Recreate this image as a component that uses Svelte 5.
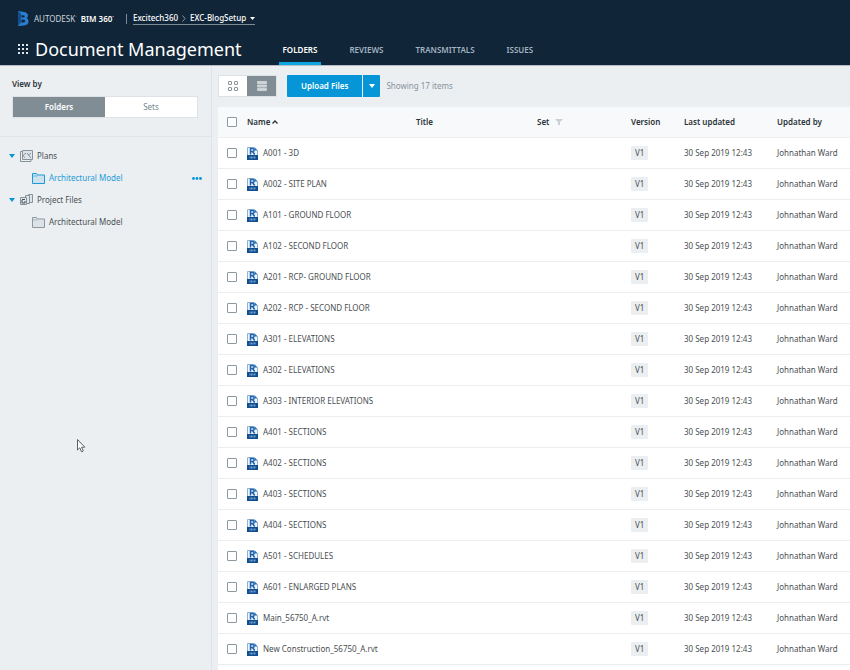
<script lang="ts">
  interface FileRow {
    name: string;
    version: string;
    updated: string;
    by: string;
  }

  const tabs = ['FOLDERS', 'REVIEWS', 'TRANSMITTALS', 'ISSUES'];

  const names = [
    'A001 - 3D',
    'A002 - SITE PLAN',
    'A101 - GROUND FLOOR',
    'A102 - SECOND FLOOR',
    'A201 - RCP- GROUND FLOOR',
    'A202 - RCP - SECOND FLOOR',
    'A301 - ELEVATIONS',
    'A302 - ELEVATIONS',
    'A303 - INTERIOR ELEVATIONS',
    'A401 - SECTIONS',
    'A402 - SECTIONS',
    'A403 - SECTIONS',
    'A404 - SECTIONS',
    'A501 - SCHEDULES',
    'A601 - ENLARGED PLANS',
    'Main_56750_A.rvt',
    'New Construction_56750_A.rvt',
  ];

  const files: FileRow[] = names.map((name) => ({
    name,
    version: 'V1',
    updated: '30 Sep 2019 12:43',
    by: 'Johnathan Ward',
  }));

  let activeTab = $state('FOLDERS');
  let viewBy = $state('Folders');
  let layout = $state('list');
  let selected = $state<string[]>([]);
  let allSelected = $derived(selected.length === files.length);

  function toggleAll() {
    selected = allSelected ? [] : files.map((f) => f.name);
  }
</script>

{#snippet folder()}
  <svg class="folder" width="13" height="11" viewBox="0 0 13 11">
    <path d="M.5 10.500v-10h4l1 1.500h7v8.500z" fill="currentColor" fill-opacity=".15" stroke="currentColor" />
    <path d="M.5 3h5" stroke="currentColor" stroke-opacity=".6" />
  </svg>
{/snippet}

<div class="app">
  <header>
    <div class="brand">
      <svg width="11" height="15" viewBox="0 0 11 15">
        <path d="M0 0l6 1c3 .5 4 2 4 3.500 0 1.200-.6 2-1.500 2.500 1.300.6 2 1.700 2 3.200 0 2.500-1.500 3.800-4.500 4.200L0 15z" fill="#2b7fd0" />
        <path d="M0 0l3 2.500v9L0 15z" fill="#134f8e" />
        <path d="M3.500 4l2.500.4c1 .2 1 1.600 0 1.800l-2.500.3zM3.500 8.500l2.800.2c1.200.2 1.200 2.200 0 2.500l-2.800.6z" fill="#102538" />
      </svg>
      <span class="maker">AUTODESK<sup>·</sup> <b>BIM 360<sup>·</sup></b></span>
      <span class="bar"></span>
      <button class="project">
        Excitech360
        <svg width="4" height="7" viewBox="0 0 4 7"><path d="M.5.5l2.500 3-2.500 3" fill="none" stroke="#8a99a5" /></svg>
        EXC-BlogSetup
        <svg width="5" height="3" viewBox="0 0 5 3"><path d="M0 0h5L2.500 3z" fill="#fff" /></svg>
      </button>
    </div>
    <div class="module">
      <button class="apps" aria-label="Switch module">
        <svg width="11" height="11" viewBox="0 0 11 11" fill="#dfe5ea">
          {#each [0, 4, 8] as y}
            {#each [0, 4, 8] as x}
              <rect {x} {y} width="2" height="2" />
            {/each}
          {/each}
        </svg>
      </button>
      <h1>Document Management</h1>
      <nav>
        {#each tabs as tab}
          <a href="#{tab.toLowerCase()}" class:active={activeTab === tab} onclick={() => (activeTab = tab)}>{tab}</a>
        {/each}
      </nav>
    </div>
  </header>

  <div class="body">
    <aside>
      <div class="view-by">
        <h2>View by</h2>
        <div class="switch">
          {#each ['Folders', 'Sets'] as v}
            <button class:on={viewBy === v} onclick={() => (viewBy = v)}>{v}</button>
          {/each}
        </div>
      </div>
      <ul class="tree">
        <li>
          <a href="#plans" class="root">
            <svg class="caret" width="6" height="4" viewBox="0 0 6 4"><path d="M0 0h6L3 4z" /></svg>
            <svg width="13" height="12" viewBox="0 0 13 12" fill="none" stroke="#87929a">
              <path d="M2.500 9.500v-9h10v9z" fill="#dfe4e8" />
              <path d="M2.500 1.500h-2v10h10.500v-2" />
              <path d="M6 3.500c-2 0-2.500 1.500-2.500 2.200S4 7.500 5 7.500M7 3l4 5M8 5.500l3-2.500" />
            </svg>
            Plans
          </a>
        </li>
        <li>
          <a href="#plans-model" class="child current">{@render folder()}Architectural Model</a>
          <button class="more" aria-label="More actions">
            <svg width="10" height="3" viewBox="0 0 10 3">
              <circle cx="1.500" cy="1.500" r="1.400" /><circle cx="5" cy="1.500" r="1.400" /><circle cx="8.500" cy="1.500" r="1.400" />
            </svg>
          </button>
        </li>
        <li>
          <a href="#project-files" class="root">
            <svg class="caret" width="6" height="4" viewBox="0 0 6 4"><path d="M0 0h6L3 4z" /></svg>
            <svg width="13" height="12" viewBox="0 0 13 12" fill="#dfe4e8" stroke="#87929a">
              <path d="M8.500.5h4v8h-4z" />
              <path d="M5.500 1.500h4v8h-4z" />
              <path d="M.5 3.500h6v7h-6z" />
              <path d="M2 5.500h3M2 6v3h3V7" stroke="#46525b" />
            </svg>
            Project Files
          </a>
        </li>
        <li>
          <a href="#files-model" class="child">{@render folder()}Architectural Model</a>
        </li>
      </ul>
    </aside>

    <main>
      <div class="toolbar">
        <div class="layouts">
          <button aria-label="Grid view" class:on={layout === 'grid'} onclick={() => (layout = 'grid')}>
            <svg width="10" height="10" viewBox="0 0 10 10" fill="none" stroke="currentColor">
              <rect x=".5" y=".5" width="3" height="3" rx=".5" /><rect x="6.500" y=".5" width="3" height="3" rx=".5" />
              <rect x=".5" y="6.500" width="3" height="3" rx=".5" /><rect x="6.500" y="6.500" width="3" height="3" rx=".5" />
            </svg>
          </button>
          <button aria-label="List view" class:on={layout === 'list'} onclick={() => (layout = 'list')}>
            <svg width="10" height="10" viewBox="0 0 10 10" fill="#cdd3d7">
              <rect width="10" height="3" rx="1" /><rect y="3.500" width="10" height="3" rx="1" /><rect y="7" width="10" height="3" rx="1" />
            </svg>
          </button>
        </div>
        <div class="upload">
          <button class="go">Upload Files</button>
          <button class="drop" aria-label="Upload options">
            <svg width="6" height="4" viewBox="0 0 6 4"><path d="M0 0h6L3 4z" fill="#fff" /></svg>
          </button>
        </div>
        <span class="count">Showing {files.length} items</span>
      </div>

      <div class="list">
        <table>
          <colgroup>
            <col class="c-check" /><col /><col class="c-title" /><col class="c-set" />
            <col class="c-version" /><col class="c-updated" /><col class="c-by" />
          </colgroup>
          <thead>
            <tr>
              <th class="check"><input type="checkbox" aria-label="Select all" checked={allSelected} onchange={toggleAll} /></th>
              <th>
                Name
                <svg class="sort" width="6" height="4" viewBox="0 0 6 4"><path d="M.5 3.500L3 1l2.500 2.500" fill="none" stroke="#2b3338" stroke-width="1.300" /></svg>
              </th>
              <th>Title</th>
              <th>
                Set
                <svg class="filter" width="8" height="6" viewBox="0 0 8 6"><path d="M0 0h8L5 3v3H3V3z" fill="#c9d2d7" /></svg>
              </th>
              <th>Version</th>
              <th>Last updated</th>
              <th>Updated by</th>
            </tr>
          </thead>
          <tbody>
            {#each files as f (f.name)}
              <tr>
                <td class="check"><input type="checkbox" aria-label="Select {f.name}" value={f.name} bind:group={selected} /></td>
                <td>
                  <div class="name">
                    <svg width="11" height="13" viewBox="0 0 11 13">
                      <path d="M.5.5h7l3 3v9H.5z" fill="#eef4fa" stroke="#8fb0d0" />
                      <path d="M7.500.5v3h3z" fill="#2c6fb0" />
                      <path d="M3.500 7.500v-6h2c2.200 0 2.200 3 0 3h-2M5.500 4.500l2.200 3" fill="none" stroke="#1b62ae" stroke-width="1.500" />
                      <path d="M0 8h11v5H0z" fill="#0f4f91" />
                      <path d="M3 9.500v2M4.500 9.500v2M6 9.500v2M7 10h1.500M7.800 10v1.500" stroke="#a9c6e4" stroke-width=".7" />
                    </svg>
                    {f.name}
                  </div>
                </td>
                <td></td>
                <td></td>
                <td><span class="badge">{f.version}</span></td>
                <td>{f.updated}</td>
                <td>{f.by}</td>
              </tr>
            {/each}
          </tbody>
        </table>
      </div>
    </main>
  </div>

  <svg class="pointer" width="9" height="14" viewBox="0 0 9 14">
    <path d="M.5.5v10.500l2.300-2.200 1.700 4 1.800-.8-1.700-3.800h3.200z" fill="#fff" stroke="#5b6166" />
  </svg>
</div>

<style>
  :global(body) { margin: 0; background: #ebeff2; }

  .app {
    position: relative;
    display: flex;
    flex-direction: column;
    height: 100vh;
    overflow: hidden;
    font-family: 'Noto Sans', sans-serif;
    font-size: 8px;
    line-height: 12px;
    color: #4a4f53;
  }

  button {
    border: 0; padding: 0; margin: 0;
    background: none; font: inherit; color: inherit;
    cursor: pointer;
  }
  a { color: inherit; text-decoration: none; }
  svg { flex: none; }

  header {
    flex: none;
    background: #102538;
    color: #fff;
    border-bottom: 1px solid #b4bcc5;
  }
  .brand { display: flex; align-items: center; height: 37px; padding-left: 18px; }
  .maker { margin-left: 5px; color: #cdd5dc; white-space: nowrap; }
  .maker b { margin-left: 2px; font-weight: 600; color: #fff; }
  .maker sup { font-size: 6px; line-height: 0; }
  .bar { width: 1px; height: 10px; margin: 0 6px 0 12px; background: #7d8b97; }
  .project {
    display: flex;
    align-items: center;
    gap: 4px;
    border-bottom: 1px solid #7d8b97;
    font-weight: 500;
    color: #fff;
  }

  .module { display: flex; align-items: stretch; height: 28px; padding-left: 18px; }
  .apps { height: 24px; display: flex; align-items: center; }
  h1 {
    margin: 0 0 0 6px;
    font-size: 18px;
    line-height: 24px;
    font-weight: 400;
    white-space: nowrap;
  }
  nav { display: flex; gap: 24px; margin-left: 37px; }
  nav a {
    padding: 7px 4px 0;
    border-bottom: 3px solid transparent;
    font-weight: 600;
    color: #a3b3c0;
  }
  nav a.active { color: #fff; border-color: #0fa5e0; }

  .body { flex: 1; display: flex; min-height: 0; }

  aside {
    flex: none;
    width: 211px;
    border-right: 1px solid #dfe4e8;
  }
  .view-by { padding: 12px 13px 18px 12px; border-bottom: 1px solid #dfe4e8; }
  h2 { margin: 0 0 6px; font-size: 8px; line-height: 12px; font-weight: 600; color: #2b3338; }
  .switch { display: grid; grid-template-columns: 1fr 1fr; border: 1px solid #dce2e6; }
  .switch button { height: 20px; background: #fff; color: #77848c; }
  .switch button.on { background: #808d95; color: #fff; font-weight: 600; }

  .tree { list-style: none; margin: 0; padding: 8px 9px 0; }
  .tree li { display: flex; align-items: center; justify-content: space-between; height: 22px; }
  .tree a { display: flex; align-items: center; gap: 4px; }
  .root .caret { margin-right: 1px; fill: #0696d7; }
  .child { padding-left: 23px; }
  .folder { color: #8d99a1; }
  .current, .current .folder { color: #1e9bd7; }
  .more { display: flex; fill: #0696d7; }

  main { flex: 1; display: flex; flex-direction: column; min-width: 0; padding-left: 6px; }
  .toolbar { flex: none; display: flex; align-items: center; height: 40px; padding-bottom: 1px; }
  .layouts { display: flex; border: 1px solid #dce2e6; }
  .layouts button {
    display: flex;
    align-items: center;
    justify-content: center;
    width: 28px;
    height: 20px;
    background: #fff;
    color: #87929a;
  }
  .layouts button.on { width: 29px; background: #808d95; color: #fff; }
  .upload { display: flex; gap: 1px; margin: 0 6px 0 10px; color: #fff; }
  .upload button { height: 22px; background: #0696d7; }
  .go { padding: 0 14px; font-weight: 600; border-radius: 1px 0 0 1px; }
  .drop { display: flex; align-items: center; justify-content: center; width: 17px; border-radius: 0 1px 1px 0; }
  .count { color: #87929a; }

  .list { flex: 1; min-height: 0; background: #fff; }
  table { width: 100%; border-collapse: collapse; table-layout: fixed; }
  .c-check { width: 29px; }
  .c-title { width: 121px; }
  .c-set { width: 94px; }
  .c-version { width: 53px; }
  .c-updated { width: 93px; }
  .c-by { width: 73px; }
  th, td { padding: 0; height: 30px; text-align: left; white-space: nowrap; border-bottom: 1px solid #eceff1; }
  th { background: #f7f9fa; font-weight: 600; color: #2b3338; }
  .sort { vertical-align: 1px; }
  .filter { margin-left: 4px; }
  th.check, td.check { padding-left: 9px; }
  input {
    display: block;
    appearance: none;
    width: 10px;
    height: 10px;
    margin: 0;
    box-sizing: border-box;
    border: 1px solid #8d99a1;
    border-radius: 1px;
    background: #fff;
  }
  input:checked { background: #0696d7; }
  .name { display: flex; align-items: center; gap: 5px; }
  .badge { display: inline-block; padding: 1px 4px; background: #ebeff2; border-radius: 1px; }

  .pointer { position: absolute; left: 77px; top: 439px; pointer-events: none; }
</style>
